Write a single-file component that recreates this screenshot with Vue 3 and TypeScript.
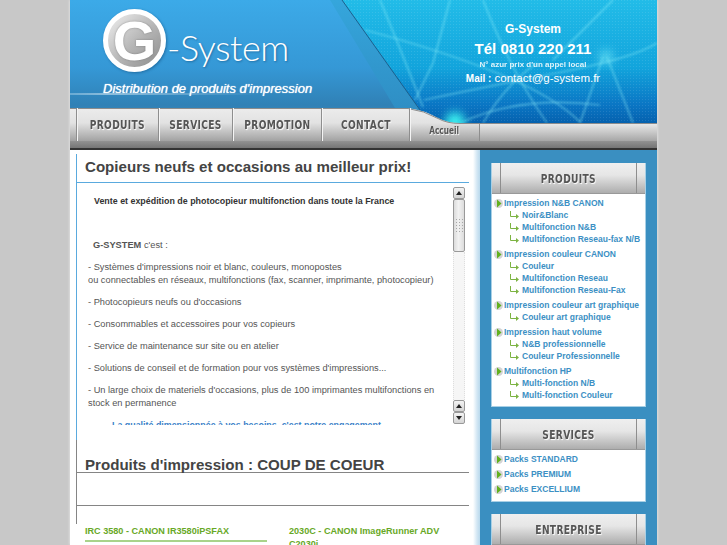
<template>
  <div class="page">
    <header class="top">
      <svg class="top-art" width="587" height="150" viewBox="70 0 587 150" aria-hidden="true">
        <defs>
          <linearGradient id="sky" x1="0" y1="0" x2="0" y2="1">
            <stop offset="0" stop-color="#3caae8" />
            <stop offset="0.55" stop-color="#3598d6" />
            <stop offset="0.85" stop-color="#3081b6" />
            <stop offset="1" stop-color="#3a86b8" />
          </linearGradient>
          <linearGradient id="net" x1="0" y1="0" x2="0" y2="1">
            <stop offset="0" stop-color="#22bce8" />
            <stop offset="0.55" stop-color="#12a4dc" />
            <stop offset="0.85" stop-color="#0a76c4" />
            <stop offset="1" stop-color="#0561ae" />
          </linearGradient>
          <linearGradient id="wedge" x1="0" y1="0" x2="0" y2="1">
            <stop offset="0" stop-color="#35a6dc" />
            <stop offset="1" stop-color="#2f8ec4" />
          </linearGradient>
          <linearGradient id="horizon" x1="0" y1="0" x2="1" y2="0">
            <stop offset="0" stop-color="#cfeaf8" stop-opacity="0.7" />
            <stop offset="0.2" stop-color="#ffffff" stop-opacity="0.9" />
            <stop offset="1" stop-color="#ffffff" stop-opacity="0" />
          </linearGradient>
          <linearGradient id="barL" gradientUnits="userSpaceOnUse" x1="0" y1="108" x2="0" y2="141">
            <stop offset="0" stop-color="#ececec" />
            <stop offset="0.45" stop-color="#e2e2e2" />
            <stop offset="1" stop-color="#a2a2a2" />
          </linearGradient>
          <linearGradient id="barR" gradientUnits="userSpaceOnUse" x1="0" y1="123" x2="0" y2="141">
            <stop offset="0" stop-color="#ececec" />
            <stop offset="1" stop-color="#a6a6a6" />
          </linearGradient>
          <linearGradient id="strip" x1="0" y1="0" x2="0" y2="1">
            <stop offset="0" stop-color="#929292" />
            <stop offset="0.75" stop-color="#767676" />
            <stop offset="0.76" stop-color="#333333" />
            <stop offset="1" stop-color="#333333" />
          </linearGradient>
          <pattern id="dots" width="3" height="3" patternUnits="userSpaceOnUse">
            <rect width="1" height="1" fill="#ffffff" fill-opacity="0.1" />
          </pattern>
          <filter id="soft" x="-10%" y="-10%" width="120%" height="120%">
            <feGaussianBlur stdDeviation="0.9" />
          </filter>
          <filter id="glow" x="-50%" y="-50%" width="200%" height="200%">
            <feGaussianBlur stdDeviation="5" />
          </filter>
        </defs>
        <rect x="70" y="0" width="587" height="123" fill="url(#sky)" />
        <rect x="70" y="93.5" width="190" height="1" fill="url(#horizon)" />
        <path d="M330 0H342L420 110L408 108H395Z" fill="url(#wedge)" />
        <path d="M342 0H657V123H455Q438 120 420 110Z" fill="url(#net)" />
        <path d="M342 0H657V123H455Q438 120 420 110Z" fill="url(#dots)" />
        <g fill="none" stroke="#8ff0fa" stroke-width="1.2" stroke-opacity="0.6" filter="url(#soft)">
          <path d="M450 0L433 63L415 100" />
          <path d="M380 0Q398 43 423 107" />
          <path d="M483 0Q510 70 547 123" />
          <path d="M365 30Q440 50 497 73T580 122" />
          <path d="M424 100Q480 88 557 73T657 43" />
          <path d="M603 57L580 123" />
          <path d="M607 57L633 123" />
          <path d="M483 123Q505 85 537 63" />
          <path d="M613 0L553 60" />
          <path d="M460 123Q520 95 600 105" />
        </g>
        <circle cx="455" cy="122" r="10" fill="#3af0f0" filter="url(#glow)" />
        <circle cx="606" cy="57" r="7" fill="#7ff0fa" fill-opacity="0.6" filter="url(#glow)" />
        <path d="M342 0L420 110" stroke="#1c5f8c" stroke-width="1" fill="none" />
        <path d="M70 108H408Q424 110 438 118Q447 123 460 123H657V141H70Z" fill="url(#barL)" />
        <rect x="480" y="123" width="177" height="18" fill="url(#barR)" />
        <rect x="479" y="123" width="1" height="18" fill="#8e8e8e" />
        <path d="M70 108.5H408Q424 110.5 438 118.500Q447 123.500 460 123.500H657" fill="none" stroke="#8c8c8c" />
        <rect x="70" y="141" width="587" height="9" fill="url(#strip)" />
      </svg>

      <div class="brand">
        <div class="identity">
          <div class="logo">
            <div class="logo-badge"><span>G</span></div>
            <span class="logo-name">-System</span>
          </div>
          <div class="tagline">Distribution de produits d'impression</div>
        </div>
        <div class="contact">
          <div class="contact-name">G-System</div>
          <div class="contact-tel">Tél 0810 220 211</div>
          <div class="contact-note">N° azur prix d'un appel local</div>
          <div class="contact-mail"><small>Mail :</small> contact@g-system.fr</div>
        </div>
      </div>

      <nav class="nav">
        <a v-for="tab in tabs" :key="tab.label" class="tab" :class="{ 'tab-small': tab.small }" :style="{ width: tab.width + 'px' }">
          <span class="narrow">{{ tab.label }}</span>
        </a>
      </nav>
    </header>

    <div class="body">
      <main class="content">
        <section class="panel panel-blue">
          <h1 class="panel-title">Copieurs neufs et occasions au meilleur prix!</h1>
          <div class="scroller">
            <div class="scroller-text">
              <p class="lead"><b>Vente et expédition de photocopieur multifonction dans toute la France</b></p>
              <p class="intro"><b>G-SYSTEM</b> c'est :</p>
              <p>- Systèmes d'impressions noir et blanc, couleurs, monopostes<br />ou connectables en réseaux, multifonctions (fax, scanner, imprimante, photocopieur)</p>
              <p>- Photocopieurs neufs ou d'occasions</p>
              <p>- Consommables et accessoires pour vos copieurs</p>
              <p>- Service de maintenance sur site ou en atelier</p>
              <p>- Solutions de conseil et de formation pour vos systèmes d'impressions...</p>
              <p>- Un large choix de materiels d'occasions, plus de 100 imprimantes multifonctions en stock en permanence</p>
              <p class="claim">La qualité dimensionnée à vos besoins, c'est notre engagement</p>
            </div>
            <div class="scrollbar">
              <span class="sb-btn"><i class="up"></i></span>
              <span class="sb-thumb"><i class="grip"></i></span>
              <span class="sb-track"></span>
              <span class="sb-btn"><i class="up"></i></span>
              <span class="sb-btn"><i class="down"></i></span>
            </div>
          </div>
        </section>

        <section class="panel panel-gray">
          <h2 class="panel-title panel-title-gray">Produits d'impression : COUP DE COEUR</h2>
          <div class="panel-empty"></div>
        </section>

        <div class="products">
          <article v-for="product in products" :key="product" class="product">
            <h3>{{ product }}</h3>
          </article>
        </div>
      </main>

      <aside class="side">
        <section v-for="box in boxes" :key="box.title" class="box">
          <h4 class="box-head"><span><em class="narrow">{{ box.title }}</em></span></h4>
          <ul v-if="box.groups.length" class="menu" :class="{ 'menu-flat': box.flat }">
            <li v-for="group in box.groups" :key="group.label">
              <a class="menu-top">
                <svg width="10" height="13" viewBox="0 0 10 13">
                  <circle cx="4.500" cy="6.500" r="4.500" fill="#d4d4d4" />
                  <path d="M3 2.500L7.500 6.500L3 10.500Z" fill="#62b01e" />
                </svg>
                {{ group.label }}
              </a>
              <a v-for="sub in group.items" :key="sub" class="menu-sub">
                <svg width="9" height="8" viewBox="0 0 9 8">
                  <path d="M0.500 0V5.500H7" fill="none" stroke="#7cb342" />
                  <path d="M6 3L9 5.500L6 8Z" fill="#7cb342" />
                </svg>
                {{ sub }}
              </a>
            </li>
          </ul>
        </section>
      </aside>
    </div>
  </div>
</template>

<script setup lang="ts">
interface MenuGroup {
  label: string;
  items: string[];
}

interface SideBox {
  title: string;
  flat?: boolean;
  groups: MenuGroup[];
}

const tabs = [
  { label: 'PRODUITS', width: 82 },
  { label: 'SERVICES', width: 74 },
  { label: 'PROMOTION', width: 89 },
  { label: 'CONTACT', width: 88 },
  { label: 'Accueil', width: 70, small: true },
];

const products = ['IRC 3580 - CANON IR3580iPSFAX', '2030C - CANON ImageRunner ADV C2030i'];

const boxes: SideBox[] = [
  {
    title: 'PRODUITS',
    groups: [
      { label: 'Impression N&B CANON', items: ['Noir&Blanc', 'Multifonction N&B', 'Multifonction Reseau-fax N/B'] },
      { label: 'Impression couleur CANON', items: ['Couleur', 'Multifonction Reseau', 'Multifonction Reseau-Fax'] },
      { label: 'Impression couleur art graphique', items: ['Couleur art graphique'] },
      { label: 'Impression haut volume', items: ['N&B professionnelle', 'Couleur Professionnelle'] },
      { label: 'Multifonction HP', items: ['Multi-fonction N/B', 'Multi-fonction Couleur'] },
    ],
  },
  {
    title: 'SERVICES',
    flat: true,
    groups: [
      { label: 'Packs STANDARD', items: [] },
      { label: 'Packs PREMIUM', items: [] },
      { label: 'Packs EXCELLIUM', items: [] },
    ],
  },
  { title: 'ENTREPRISE', groups: [] },
];
</script>

<style>
html,
body {
  margin: 0;
  background: #c8c8c8;
  overflow: hidden;
}
</style>

<style scoped>
.page {
  width: 587px;
  height: 545px;
  margin: 0 auto;
  overflow: hidden;
  font-family: "Liberation Sans", Arial, sans-serif;
  box-shadow: 0 0 3px rgba(255, 255, 255, 0.7);
}

/* Header */
.top {
  position: relative;
  height: 150px;
}

.top-art {
  position: absolute;
  inset: 0;
  display: block;
}

.brand {
  position: relative;
  height: 108px;
  display: flex;
  justify-content: space-between;
  color: #fff;
}

.identity {
  padding: 9px 0 0 33px;
}

.logo {
  display: flex;
  height: 71px;
}

.logo-badge {
  width: 63px;
  height: 63px;
  box-sizing: border-box;
  border: 5px solid #fff;
  border-radius: 50%;
  background: linear-gradient(135deg, #f0f0f0, #b4b4b4 55%, #8c8c8c);
  display: flex;
  align-items: center;
  justify-content: center;
  box-shadow: 1px 1px 3px rgba(0, 40, 80, 0.4);
}

.logo-badge span {
  font-size: 56px;
  font-weight: 700;
  line-height: 1;
  color: #fff;
  text-shadow: 0 0 2px rgba(90, 90, 90, 0.6);
}

.logo-name {
  margin: 14px 0 0 1px;
  font-family: Lato, sans-serif;
  font-weight: 300;
  font-size: 36px;
  letter-spacing: -0.4px;
  line-height: 48px;
  color: #fff;
  text-shadow: 1px 1px 2px rgba(0, 50, 90, 0.4);
}

.tagline {
  margin-top: 1px;
  font-size: 13px;
  line-height: 16px;
  font-style: italic;
  text-shadow: 0 0 1px #fff;
}

.contact {
  width: 190px;
  padding: 22px 0 0;
  text-align: center;
  font-weight: 700;
  position: relative;
  left: -29px;
}

.contact-name {
  font-size: 12px;
  line-height: 15px;
}

.contact-tel {
  margin-top: 2px;
  font-size: 15px;
  line-height: 19px;
}

.contact-note {
  margin-top: 1px;
  font-size: 8px;
  line-height: 12px;
  opacity: 0.85;
}

.contact-mail {
  font-size: 11.500px;
  line-height: 14px;
  font-weight: 400;
}

.contact-mail small {
  font-size: 10px;
  font-weight: 700;
}

.nav {
  position: relative;
  display: flex;
  height: 33px;
  padding-left: 6px;
}

.tab {
  box-sizing: border-box;
  border-left: 1px solid #8e8e8e;
  box-shadow: inset 1px 0 0 #f4f4f4;
  display: flex;
  align-items: center;
  justify-content: center;
  color: #555;
}

.narrow {
  display: inline-block;
  transform: scaleX(0.78);
  font-family: "DejaVu Sans Condensed", "DejaVu Sans", sans-serif;
  font-stretch: condensed;
  font-style: normal;
  font-size: 13px;
  font-weight: 700;
  letter-spacing: 0.4px;
  white-space: nowrap;
  color: #555;
  text-shadow: 1px 1px 1px #fff;
}

.tab-small {
  align-items: flex-end;
  padding-bottom: 4px;
}

.tab-small .narrow {
  font-size: 10.500px;
  line-height: 13px;
  letter-spacing: 0;
}

/* Layout */
.body {
  display: flex;
  height: 395px;
}

.content {
  width: 410px;
  box-sizing: border-box;
  padding: 4px 11px 0 6px;
  background: linear-gradient(to right, #fff 403px, #d2e6f3 407px, #b8d8ec);
}

.panel-blue {
  border-left: 1px solid #5aaade;
  padding-bottom: 15px;
}

.panel-gray {
  border-left: 1px solid #858585;
  padding-bottom: 18px;
}

.panel-title {
  margin: 0;
  height: 29px;
  box-sizing: border-box;
  padding-left: 8px;
  border-bottom: 1px solid #5aaade;
  font-size: 15.100px;
  line-height: 25px;
  font-weight: 700;
  color: #444;
}

.panel-title-gray {
  height: 33px;
  line-height: 49px;
  border-bottom-color: #858585;
}

.panel-empty {
  height: 33px;
  box-sizing: border-box;
  border-bottom: 1px solid #858585;
}

/* Scrolling intro block */
.scroller {
  position: relative;
  height: 242px;
  overflow: hidden;
}

.scroller-text {
  padding: 12px 24px 0 11px;
  font-size: 9.250px;
  line-height: 13px;
  color: #555;
}

.scroller-text p {
  margin: 0 0 9px;
}

.scroller-text .lead {
  margin-bottom: 31px;
  padding-left: 6px;
  font-size: 8.900px;
  color: #333;
}

.scroller-text .intro {
  padding-left: 5px;
}

.scroller-text .claim {
  padding-left: 24px;
  font-size: 8.900px;
  font-weight: 700;
  color: #3a7fc8;
}

.scrollbar {
  position: absolute;
  top: 4px;
  right: 4px;
  width: 12px;
  height: 237px;
  display: flex;
  flex-direction: column;
}

.sb-btn {
  flex: none;
  height: 12px;
  box-sizing: border-box;
  border: 1px solid #999;
  border-radius: 2px;
  background: linear-gradient(#f4f4f4, #d4d4d4);
  display: flex;
  align-items: center;
  justify-content: center;
}

.sb-btn i {
  width: 0;
  height: 0;
  border-left: 3px solid transparent;
  border-right: 3px solid transparent;
}

.sb-btn .up {
  border-bottom: 4px solid #222;
}

.sb-btn .down {
  border-top: 4px solid #222;
}

.sb-thumb {
  flex: none;
  height: 53px;
  box-sizing: border-box;
  border: 1px solid #999;
  border-radius: 2px;
  background: linear-gradient(to right, #dcdcdc, #f2f2f2 45%, #dcdcdc);
  display: flex;
  align-items: center;
  justify-content: center;
}

.grip {
  width: 9px;
  height: 16px;
  background-image: radial-gradient(#a8a8a8 0.700px, transparent 0.900px);
  background-size: 3px 3px;
}

.sb-track {
  flex: 1;
  background: #f6f6f6;
  border-left: 1px dotted #dedede;
  border-right: 1px dotted #dedede;
}

/* Product list */
.products {
  display: grid;
  grid-template-columns: 182px 172px;
  column-gap: 22px;
  padding-left: 9px;
}

.product h3 {
  margin: 0;
  padding: 1px 0 2px;
  border-bottom: 2px solid #a9d38a;
  font-size: 9.100px;
  line-height: 13px;
  font-weight: 700;
  color: #67a826;
}

.product:last-child h3 {
  border-bottom: 0;
}

/* Sidebar */
.side {
  width: 177px;
  min-width: 0;
  box-sizing: border-box;
  padding: 13px 11px 0;
  background: #3a8fc1;
  display: flex;
  flex-direction: column;
  gap: 12px;
}

.box {
  flex: none;
  background: #fff;
  box-sizing: border-box;
  border: 1px solid #a8d0e6;
  border-top: 0;
  padding-bottom: 2px;
}

.box-head {
  margin: 0;
  height: 31px;
  box-sizing: border-box;
  padding: 0 8px;
  border-bottom: 1px solid #999;
  background: linear-gradient(#efefef, #e6e6e6 40%, #adadad);
}

.box-head span {
  display: flex;
  height: 100%;
  align-items: center;
  justify-content: center;
  border-left: 1px solid #8e8e8e;
  border-right: 1px solid #8e8e8e;
}

.menu {
  list-style: none;
  margin: 0;
  padding: 3px 0 0 2px;
  font-size: 8.500px;
  font-weight: 700;
  color: #3c90c4;
}

.menu li {
  margin-bottom: 3px;
}

.menu-flat {
  padding-bottom: 1px;
}

.menu-top,
.menu-sub {
  display: flex;
  align-items: center;
  height: 12px;
  white-space: nowrap;
}

.menu-sub {
  padding-left: 16px;
}

.menu-sub svg {
  margin-right: 3px;
}
</style>
